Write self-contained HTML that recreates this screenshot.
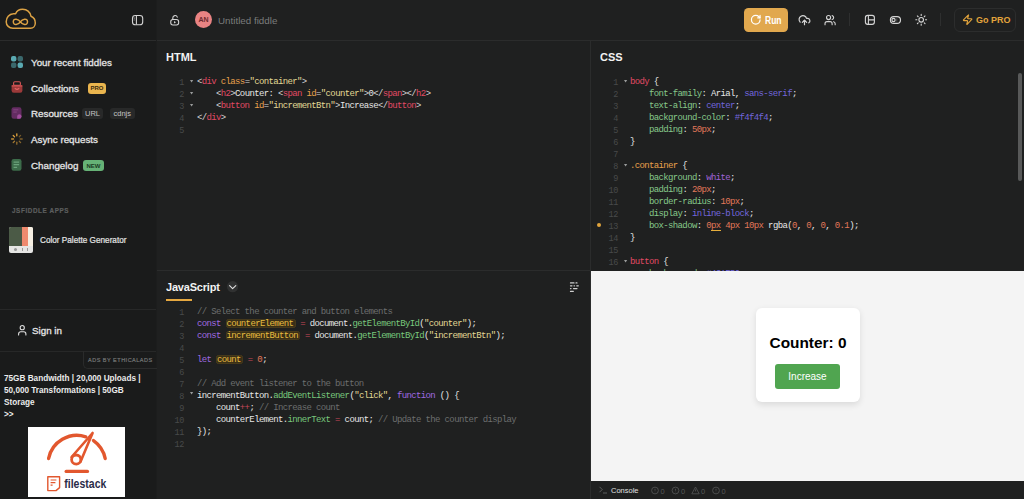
<!DOCTYPE html>
<html><head><meta charset="utf-8">
<style>
*{margin:0;padding:0;box-sizing:border-box}
html,body{width:1024px;height:499px;overflow:hidden;background:#1f2020;font-family:"Liberation Sans",sans-serif;color:#e8e8e8}
.a{position:absolute}
svg{position:absolute;overflow:visible}
#side{position:absolute;left:0;top:0;width:156px;height:499px;background:#1a1b1b}
.ln0{position:absolute;background:#2b2c2c}
.nav{position:absolute;left:31px;font-size:9.8px;color:#e4e4e4;white-space:nowrap;line-height:12px;-webkit-text-stroke:0.3px #e4e4e4}
.badge{position:absolute;font-size:6.5px;font-weight:bold;border-radius:3px;text-align:center;line-height:11px}
.ptitle{position:absolute;font-size:11px;font-weight:bold;color:#f2f2f2;line-height:14px;transform:scaleY(1.07);transform-origin:0 50%}
.code{position:absolute;font-family:"Liberation Mono",monospace;font-size:9px;letter-spacing:-0.64px;line-height:12px;white-space:pre;color:#e6e6e6}
.lnum{position:absolute;font-family:"Liberation Mono",monospace;font-size:8.5px;letter-spacing:-0.3px;line-height:12px;color:#484a4a;text-align:right;white-space:pre;width:24px}
.fold{position:absolute;width:0;height:0;border-left:1.8px solid transparent;border-right:1.8px solid transparent;border-top:2.6px solid #909292}
.t{color:#e04a64}.at{color:#e8a04c}.s{color:#e2d894}.p{color:#d6d6d6}
.cp{color:#86c88a}.cv{color:#7266dc}.cn{color:#e2785a}.cs{color:#e04a64}.cw{color:#a064d8}
.kw{color:#a06ae0}.cm{color:#6c6e6e}.fn{color:#78c87c}.hl{color:#e8bc40;padding:0 1px;margin-right:1.2px}
.hlb{position:absolute;background:#3a3017;border:0.6px solid #46391b;border-radius:2.2px}
.op{color:#c8485a}
</style></head><body>
<div id="side"></div>
<div class="ln0" style="left:0;top:40px;width:1024px;height:1px"></div>
<div class="ln0" style="left:156px;top:0;width:1px;height:499px;background:#1c1d1d"></div>

<!-- logo -->
<svg style="left:0;top:0" width="40" height="40" viewBox="0 0 40 40">
<path d="M12.8 28.3 H30.5 C33.2 28.3 35.3 26 35.3 23 C35.3 19.8 33.5 17.3 31 16.3 C30 11.8 26.8 9.2 22.6 9.2 C19.4 9.2 16.7 11 15.6 13.8 C14.8 13.6 14 13.6 13.2 13.7 C9.2 14 6.2 17.8 6.2 21.7 C6.2 25.4 9.2 28.3 12.8 28.3 Z" fill="none" stroke="#dca244" stroke-width="1.5" stroke-linejoin="round"/>
<path d="M20.4 21.8 C18.6 19 13.3 17.6 13.3 21.8 C13.3 26 18.6 24.6 20.4 21.8 C22.2 19 27.5 17.6 27.5 21.8 C27.5 26 22.2 24.6 20.4 21.8 Z" fill="none" stroke="#dca244" stroke-width="1.5"/>
</svg>
<!-- sidebar toggle icon -->
<svg style="left:125px;top:8px" width="25" height="25" viewBox="0 0 25 25">
<rect x="7.5" y="7.5" width="10.2" height="9.2" rx="2.8" fill="none" stroke="#d4d4d4" stroke-width="1.1"/>
<line x1="11.4" y1="7.6" x2="11.4" y2="16.6" stroke="#d4d4d4" stroke-width="1.1"/>
<line x1="9.2" y1="9.6" x2="9.2" y2="10.6" stroke="#d4d4d4" stroke-width="0.9"/>
<line x1="9.2" y1="11.6" x2="9.2" y2="12.4" stroke="#d4d4d4" stroke-width="0.9"/>
</svg>

<!-- sidebar nav -->
<svg style="left:11px;top:56px" width="12" height="12" viewBox="0 0 12 12">
<rect x="0" y="0" width="5.4" height="5.4" rx="2" fill="#5aaab2"/><rect x="6.6" y="0" width="5.4" height="5.4" rx="2" fill="#3a686c"/>
<rect x="0" y="6.6" width="5.4" height="5.4" rx="2" fill="#3a686c"/><rect x="6.6" y="6.6" width="5.4" height="5.4" rx="2" fill="#5aaab2"/>
</svg>
<div class="nav" style="top:57px">Your recent fiddles</div>

<svg style="left:11px;top:81px" width="12" height="12" viewBox="0 0 12 12">
<rect x="2.6" y="0.8" width="6.8" height="3.6" rx="1.2" fill="none" stroke="#d65656" stroke-width="1.1"/>
<path d="M0.6 4.6 H11.4 V9.6 Q11.4 11.8 9.2 11.8 H2.8 Q0.6 11.8 0.6 9.6 Z" fill="#9c3a3a"/>
<rect x="0.6" y="4.2" width="10.8" height="1.3" rx="0.6" fill="#d65656"/>
<path d="M4.1 7.4 Q6 9.4 7.9 7.4" stroke="#e46464" stroke-width="1.1" fill="none" stroke-linecap="round"/>
</svg>
<div class="nav" style="top:82.5px">Collections</div>
<div class="badge" style="left:88px;top:83px;width:18px;height:11px;background:#eab54e;color:#3a2a10;font-size:6px">PRO</div>

<svg style="left:11px;top:107px" width="11" height="12" viewBox="0 0 11 12">
<rect x="0.5" y="0.3" width="10" height="11.4" rx="2.2" fill="#642c62"/>
<rect x="2.3" y="2.4" width="5" height="0.9" fill="#8a4886"/><rect x="2.3" y="4.6" width="3.5" height="0.9" fill="#8a4886"/>
<path d="M6.2 11.7 V9 A2.2 2.2 0 0 1 10.5 9 V9.5 Q10.5 11.7 8.3 11.7 Z" fill="#a24e9e"/>
</svg>
<div class="nav" style="top:107.5px">Resources</div>
<div class="badge" style="left:82px;top:108px;width:21px;height:11px;background:#282929;color:#c4c4c4;font-weight:normal;font-size:7.5px">URL</div>
<div class="badge" style="left:109.5px;top:108px;width:25.5px;height:11px;background:#282929;color:#c4c4c4;font-weight:normal;font-size:7.5px">cdnjs</div>

<svg style="left:11px;top:133px" width="12" height="12" viewBox="0 0 12 12">
<g stroke="#e2a43c" stroke-width="1.3" stroke-linecap="round">
<line x1="5.8" y1="0.8" x2="5.8" y2="2.8"/><line x1="5.8" y1="9.2" x2="5.8" y2="11.2" opacity=".6"/>
<line x1="0.6" y1="6" x2="2.6" y2="6" opacity=".85"/><line x1="9.2" y1="6" x2="11.2" y2="6" opacity=".5"/>
<line x1="2.2" y1="2.4" x2="3.5" y2="3.7"/><line x1="8.3" y1="8.3" x2="9.6" y2="9.6" opacity=".55"/>
<line x1="9.6" y1="2.4" x2="8.3" y2="3.7" opacity=".45"/><line x1="2.2" y1="9.6" x2="3.5" y2="8.3" opacity=".7"/>
</g></svg>
<div class="nav" style="top:134px">Async requests</div>

<svg style="left:11px;top:159px" width="11" height="12" viewBox="0 0 11 12">
<rect x="0.5" y="0" width="10" height="11.8" rx="2.2" fill="#3c6c4a"/>
<rect x="2.6" y="2.6" width="5.5" height="1" fill="#78b088"/><rect x="2.6" y="5.2" width="5.5" height="1" fill="#78b088"/><rect x="2.6" y="7.8" width="3.5" height="1" fill="#78b088"/>
</svg>
<div class="nav" style="top:160px">Changelog</div>
<div class="badge" style="left:83px;top:160px;width:21px;height:11px;background:#66b276;color:#1a3a22;font-size:6px;line-height:12.5px">NEW</div>

<div class="a" style="left:12px;top:207px;font-size:6.3px;font-weight:bold;letter-spacing:0.62px;color:#5c5e5e;line-height:8px;-webkit-text-stroke:0.2px #5c5e5e">JSFIDDLE APPS</div>
<div class="a" style="left:9px;top:227px;width:24px;height:26px;border-radius:2px;overflow:hidden;background:#e6e6e4">
 <div class="a" style="left:0;top:0;width:13px;height:19px;background:#4b5a46"></div>
 <div class="a" style="left:13px;top:0;width:6px;height:19px;background:#ef8a6e"></div>
 <div class="a" style="left:19px;top:0;width:5px;height:19px;background:#f6efe2"></div>
 <div class="a" style="left:5px;top:21px;width:3px;height:3px;border-radius:50%;background:#9a9a9a"></div>
 <div class="a" style="left:13px;top:21px;width:1px;height:3px;background:#9a9a9a"></div>
 <div class="a" style="left:18px;top:21px;width:1px;height:3px;background:#9a9a9a"></div>
</div>
<div class="a" style="left:40px;top:236px;font-size:8.2px;color:#e4e4e4;line-height:10px;white-space:nowrap;-webkit-text-stroke:0.2px #e4e4e4">Color Palette Generator</div>

<div class="ln0" style="left:0;top:309px;width:156px;height:1px;background:#272828"></div>
<svg style="left:15.7px;top:324.2px" width="12.5" height="12.5" viewBox="0 0 24 24">
<g fill="none" stroke="#dedede" stroke-width="2.1" stroke-linecap="round"><path d="M19 21v-2a4 4 0 0 0-4-4H9a4 4 0 0 0-4 4v2"/><circle cx="12" cy="7" r="4"/></g></svg>
<div class="nav" style="left:32px;top:325px">Sign in</div>
<div class="ln0" style="left:0;top:351px;width:156px;height:1px;background:#272828"></div>
<div class="a" style="left:83px;top:351px;width:74px;height:18px;border-left:1px solid #2a2b2b;border-bottom:1px solid #2a2b2b;border-bottom-left-radius:5px"></div>
<div class="a" style="left:88px;top:357px;font-size:5.5px;letter-spacing:0.5px;color:#747676;line-height:7.5px;white-space:nowrap;-webkit-text-stroke:0.2px #747676">ADS BY ETHICALADS</div>
<div class="a" style="left:4px;top:372.5px;width:140px;font-size:8.2px;font-weight:bold;color:#ececec;line-height:12.2px">75GB Bandwidth | 20,000 Uploads | 50,000 Transformations | 50GB Storage<br>&gt;&gt;</div>
<div class="a" style="left:28px;top:427px;width:97px;height:70px;background:#fff"></div>
<svg style="left:28px;top:427px" width="97" height="70" viewBox="0 0 97 70">
<path d="M20.6 31.5 A28.9 28.9 0 0 1 57.8 9.8" fill="none" stroke="#e2572e" stroke-width="3.4" stroke-linecap="round"/>
<path d="M65.5 13.6 A28.9 28.9 0 0 1 77.2 31.5" fill="none" stroke="#e2572e" stroke-width="3.4" stroke-linecap="round"/>
<path d="M43.6 30 L64.6 6 L52.6 34.6" fill="#fff" stroke="#e2572e" stroke-width="2.6" stroke-linejoin="round" stroke-linecap="round"/>
<circle cx="48.2" cy="32.6" r="4.6" fill="#fff" stroke="#e2572e" stroke-width="2.8"/>
<line x1="38.2" y1="44.4" x2="59.4" y2="44.4" stroke="#e2572e" stroke-width="3.4" stroke-linecap="round"/>
<path d="M19.8 49.8 H31.6 V60.6 L28 63.6 H19.8 Z" fill="none" stroke="#e2572e" stroke-width="1.4" stroke-linejoin="round"/>
<path d="M22.6 53 H28.4 M22.6 55.6 H27.4 M22.6 58.2 H24.6" stroke="#e2572e" stroke-width="1.2"/>
<text x="36.3" y="60.8" font-family="Liberation Sans" font-weight="bold" font-size="12.6" fill="#2a2c48" textLength="42" lengthAdjust="spacingAndGlyphs">filestack</text>
</svg>

<!-- header middle -->
<svg style="left:162px;top:8px" width="25" height="25" viewBox="0 0 25 25">
<path d="M10.8 11.4 V9.9 A2.3 2.3 0 0 1 15.3 9.2" fill="none" stroke="#d4d4d4" stroke-width="1.1" stroke-linecap="round"/>
<rect x="8.75" y="11.45" width="7.9" height="5.6" rx="2.2" fill="none" stroke="#d4d4d4" stroke-width="1.1"/>
<path d="M12 13.1 L14 14.25 L12 15.4 Z" fill="#d4d4d4"/>
</svg>
<div class="a" style="left:195px;top:11px;width:17px;height:17px;border-radius:50%;background:#e98383;color:#6e2a2e;font-size:7px;font-weight:bold;text-align:center;line-height:17px">AN</div>
<div class="a" style="left:218px;top:15px;font-size:9.8px;color:#7a7c7c;line-height:12px">Untitled fiddle</div>

<!-- header right -->
<div class="a" style="left:744px;top:8px;width:44px;height:23.6px;border-radius:4.5px;background:#e1a84e"></div>
<svg style="left:750.4px;top:14.4px" width="11.5" height="11.5" viewBox="0 0 24 24">
<g fill="none" stroke="#fff" stroke-width="2.5" stroke-linecap="round" stroke-linejoin="round">
<path d="M21 12a9 9 0 1 1-9-9c2.52 0 4.93 1 6.74 2.74L21 8"/><path d="M21 3v5h-5"/></g></svg>
<div class="a" style="left:765px;top:12.6px;font-size:8.5px;font-weight:bold;color:#fff;line-height:12px;transform:scaleY(1.19);transform-origin:0 0">Run</div>
<svg style="left:797.6px;top:13.6px" width="13" height="13" viewBox="0 0 24 24">
<g fill="none" stroke="#d4d4d4" stroke-width="2.2" stroke-linecap="round" stroke-linejoin="round">
<path d="M4 14.899A7 7 0 1 1 15.71 8h1.79a4.5 4.5 0 0 1 2.5 8.242"/><path d="M12 11.5v8.2"/><path d="m16 15.5-4-4-4 4"/></g></svg>
<svg style="left:824px;top:14.2px" width="12.2" height="12.2" viewBox="0 0 24 24">
<g fill="none" stroke="#d4d4d4" stroke-width="2.2" stroke-linecap="round" stroke-linejoin="round">
<path d="M16 21v-2a4 4 0 0 0-4-4H6a4 4 0 0 0-4 4v2"/><circle cx="9" cy="7" r="4"/><path d="M22 21v-2a4 4 0 0 0-3-3.87"/><path d="M16 3.13a4 4 0 0 1 0 7.75"/></g></svg>
<div class="a" style="left:849px;top:13px;width:1px;height:13px;background:#2e2f2f"></div>
<svg style="left:858px;top:8px" width="24" height="24" viewBox="0 0 24 24">
<g fill="none" stroke="#d4d4d4" stroke-width="1.1">
<rect x="7.4" y="7.4" width="9" height="9" rx="2.3"/><path d="M10.4 7.5 V16.4 M10.4 11.9 H16.4"/></g></svg>
<svg style="left:886px;top:12px" width="20" height="16" viewBox="0 0 20 16">
<g fill="none" stroke="#d4d4d4" stroke-width="1.15">
<rect x="4.4" y="4.6" width="10.1" height="6.8" rx="3.4"/><circle cx="7.5" cy="7.95" r="1.6"/><path d="M10.8 6.4 V9.5" stroke-width="0.6" opacity=".5"/></g></svg>
<svg style="left:911px;top:10px" width="20" height="20" viewBox="0 0 20 20">
<g fill="none" stroke="#d4d4d4" stroke-width="1.1" stroke-linecap="round">
<circle cx="10.2" cy="9.8" r="2.3"/><path d="M14.50 9.80L15.60 9.80M13.24 12.84L14.02 13.62M10.20 14.10L10.20 15.20M7.16 12.84L6.38 13.62M5.90 9.80L4.80 9.80M7.16 6.76L6.38 5.98M10.20 5.50L10.20 4.40M13.24 6.76L14.02 5.98"/></g></svg>
<div class="a" style="left:940px;top:13px;width:1px;height:13px;background:#2e2f2f"></div>
<div class="a" style="left:954.4px;top:8.2px;width:62px;height:23.5px;border-radius:6px;border:1px solid #2c2d2d"></div>
<svg style="left:961.8px;top:14.2px" width="11.3" height="11.3" viewBox="0 0 24 24">
<path d="M4 14a1 1 0 0 1-.78-1.63l9.9-10.2a.5.5 0 0 1 .86.46l-1.92 6.02A1 1 0 0 0 13 10h7a1 1 0 0 1 .78 1.63l-9.9 10.2a.5.5 0 0 1-.86-.46l1.92-6.02A1 1 0 0 0 11 14z" fill="none" stroke="#e2a43c" stroke-width="2.4" stroke-linejoin="round"/></svg>
<div class="a" style="left:976px;top:12.6px;font-size:9px;font-weight:bold;color:#e2a43c;line-height:12px;transform:scaleY(1.1);transform-origin:0 0">Go PRO</div>

<!-- panel separators -->
<div class="ln0" style="left:590px;top:41px;width:1px;height:458px"></div>
<div class="ln0" style="left:157px;top:270px;width:433px;height:1px"></div>

<!-- HTML panel -->
<div class="ptitle" style="left:166px;top:50px">HTML</div>
<div class="lnum" style="left:160px;top:77px">1
2
3
4
5</div>
<div class="code" style="left:197px;top:76px"><span class="p">&lt;</span><span class="t">div</span> <span class="at">class</span><span class="p">=</span><span class="s">"container"</span><span class="p">&gt;</span>
    <span class="p">&lt;</span><span class="t">h2</span><span class="p">&gt;</span>Counter: <span class="p">&lt;</span><span class="t">span</span> <span class="at">id</span><span class="p">=</span><span class="s">"counter"</span><span class="p">&gt;</span>0<span class="p">&lt;/</span><span class="t">span</span><span class="p">&gt;&lt;/</span><span class="t">h2</span><span class="p">&gt;</span>
    <span class="p">&lt;</span><span class="t">button</span> <span class="at">id</span><span class="p">=</span><span class="s">"incrementBtn"</span><span class="p">&gt;</span>Increase<span class="p">&lt;/</span><span class="t">button</span><span class="p">&gt;</span>
<span class="p">&lt;/</span><span class="t">div</span><span class="p">&gt;</span>
</div>
<svg style="left:189.7px;top:80.0px" width="4" height="3" viewBox="0 0 4 3"><path d="M0 0 H3.2 L1.6 2.4 Z" fill="#9a9c9c"/></svg>
<svg style="left:189.7px;top:92.0px" width="4" height="3" viewBox="0 0 4 3"><path d="M0 0 H3.2 L1.6 2.4 Z" fill="#9a9c9c"/></svg>
<svg style="left:189.7px;top:104.0px" width="4" height="3" viewBox="0 0 4 3"><path d="M0 0 H3.2 L1.6 2.4 Z" fill="#9a9c9c"/></svg>

<!-- CSS panel -->
<div class="ptitle" style="left:600px;top:50px">CSS</div>
<div class="lnum" style="left:594px;top:77px">1
2
3
4
5
6
7
8
9
10
11
12
13
14
15
16</div>
<div class="code" style="left:630px;top:76px"><span class="cs">body</span> {
    <span class="cp">font-family</span>: Arial, <span class="cv">sans-serif</span>;
    <span class="cp">text-align</span>: <span class="cv">center</span>;
    <span class="cp">background-color</span>: <span class="cv">#f4f4f4</span>;
    <span class="cp">padding</span>: <span class="cn">50px</span>;
}

<span class="at">.container</span> {
    <span class="cp">background</span>: <span class="cw">white</span>;
    <span class="cp">padding</span>: <span class="cn">20px</span>;
    <span class="cp">border-radius</span>: <span class="cn">10px</span>;
    <span class="cp">display</span>: <span class="cv">inline-block</span>;
    <span class="cp">box-shadow</span>: <span class="cn">0px</span> <span class="cn">4px</span> <span class="cn">10px</span> rgba(<span class="cn">0</span>, <span class="cn">0</span>, <span class="cn">0</span>, <span class="cn">0.1</span>);
}

<span class="cs">button</span> {
    <span class="cp">background</span>: <span class="cv">#4CAF50</span>;
</div>
<svg style="left:623.7px;top:80.0px" width="4" height="3" viewBox="0 0 4 3"><path d="M0 0 H3.2 L1.6 2.4 Z" fill="#9a9c9c"/></svg>
<svg style="left:623.7px;top:164.0px" width="4" height="3" viewBox="0 0 4 3"><path d="M0 0 H3.2 L1.6 2.4 Z" fill="#9a9c9c"/></svg>
<svg style="left:623.7px;top:260.0px" width="4" height="3" viewBox="0 0 4 3"><path d="M0 0 H3.2 L1.6 2.4 Z" fill="#9a9c9c"/></svg>
<div class="a" style="left:711px;top:229.5px;width:10px;height:1.2px;background:#e6ae3c"></div>
<div class="a" style="left:597px;top:223px;width:4px;height:4px;border-radius:50%;background:#e2a43c"></div>
<div class="a" style="left:1018px;top:73px;width:4px;height:108px;border-radius:2px;background:#585959"></div>

<!-- JS panel -->
<div class="ptitle" style="left:166px;top:280px;letter-spacing:-0.2px">JavaScript</div>
<svg style="left:227px;top:281px" width="12" height="12" viewBox="0 0 12 12">
<circle cx="5.6" cy="5.7" r="5.6" fill="#303131"/>
<path d="M2.6 4.6 L5.6 7.6 L8.8 4.6" fill="none" stroke="#e0e0e0" stroke-width="1.1" stroke-linecap="round" stroke-linejoin="round"/>
</svg>
<div class="a" style="left:166px;top:299px;width:26px;height:2px;background:#e6a840"></div>
<svg style="left:569px;top:281px" width="11" height="12" viewBox="0 0 11 12">
<g stroke="#cfcfcf" stroke-width="1.2" stroke-linecap="round">
<line x1="1.5" y1="1.9" x2="5" y2="1.9"/><line x1="7" y1="1.9" x2="8" y2="1.9"/>
<line x1="1.5" y1="4.8" x2="3" y2="4.8"/><line x1="5" y1="4.8" x2="5.5" y2="4.8"/><line x1="7.8" y1="4.8" x2="9.3" y2="4.8"/>
<line x1="1.5" y1="7.6" x2="2" y2="7.6"/><line x1="4.5" y1="7.6" x2="8" y2="7.6"/>
<line x1="1.5" y1="10.4" x2="4.3" y2="10.4"/>
</g></svg>
<div class="lnum" style="left:160px;top:307px">1
2
3
4
5
6
7
8
9
10
11
12</div>
<div class="hlb" style="left:225.5px;top:319px;width:70.4px;height:8.8px"></div>
<div class="hlb" style="left:225.5px;top:331px;width:74.6px;height:8.8px"></div>
<div class="hlb" style="left:216px;top:355px;width:27px;height:8.8px"></div>
<div class="code" style="left:197px;top:306px"><span class="cm">// Select the counter and button elements</span>
<span class="kw">const</span> <span class="hl">counterElement</span> <span class="op">=</span> document.<span class="fn">getElementById</span>(<span class="s">"counter"</span>);
<span class="kw">const</span> <span class="hl">incrementButton</span> <span class="op">=</span> document.<span class="fn">getElementById</span>(<span class="s">"incrementBtn"</span>);

<span class="kw">let</span> <span class="hl">count</span> <span class="op">=</span> <span class="cn">0</span>;

<span class="cm">// Add event listener to the button</span>
incrementButton.<span class="fn">addEventListener</span>(<span class="s">"click"</span>, <span class="kw">function</span> () {
    count<span class="op">++</span>; <span class="cm">// Increase count</span>
    counterElement.<span class="fn">innerText</span> <span class="op">=</span> count; <span class="cm">// Update the counter display</span>
});
</div>
<svg style="left:189.7px;top:392.0px" width="4" height="3" viewBox="0 0 4 3"><path d="M0 0 H3.2 L1.6 2.4 Z" fill="#9a9c9c"/></svg>

<!-- Result -->
<div class="a" style="left:591px;top:271px;width:433px;height:209.5px;background:#f4f4f4"></div>
<div class="a" style="left:756px;top:308px;width:104px;height:94px;background:#fff;border-radius:6px;box-shadow:0 2.5px 6px rgba(0,0,0,0.1)"></div>
<div class="a" style="left:756px;top:333.5px;width:104px;text-align:center;font-size:15.4px;font-weight:bold;color:#000;line-height:18px">Counter: 0</div>
<div class="a" style="left:775px;top:364px;width:65px;height:25px;border-radius:3px;background:#50a550;color:#fff;font-size:10px;text-align:center;line-height:25px">Increase</div>

<!-- console bar -->
<div class="a" style="left:591px;top:480.5px;width:433px;height:18.5px;background:#1f2020"></div>
<svg style="left:598.5px;top:486px" width="10" height="8" viewBox="0 0 10 8">
<path d="M0.5 0.8 L3.2 3.5 L0.5 6.2 M4 7 H8" fill="none" stroke="#6a6c6c" stroke-width="0.8"/>
</svg>
<div class="a" style="left:611px;top:485.5px;font-size:7.5px;color:#e0e0e0;line-height:10px">Console</div>
<svg style="left:651px;top:485.5px" width="80" height="10" viewBox="0 0 80 10">
<g fill="none" stroke="#555757" stroke-width="0.8">
<circle cx="4" cy="4.5" r="3.4"/><path d="M4 2.8 V4.6 M4 5.8 V6.2"/>
<circle cx="24.5" cy="4.5" r="3.4"/><path d="M24.5 2.8 V4.6 M24.5 5.8 V6.2"/>
<path d="M44.5 1 L48.2 7.8 H40.8 Z"/><path d="M44.5 3.4 V5.4"/>
<circle cx="65" cy="4.5" r="3.4"/><path d="M65 2.8 V4.6 M65 5.8 V6.2"/>
</g>
<g fill="#555757" font-family="Liberation Sans" font-size="7.5">
<text x="9.5" y="7.5">0</text><text x="30" y="7.5">0</text><text x="50" y="7.5">0</text><text x="70.5" y="7.5">0</text>
</g>
</svg>
</body></html>
